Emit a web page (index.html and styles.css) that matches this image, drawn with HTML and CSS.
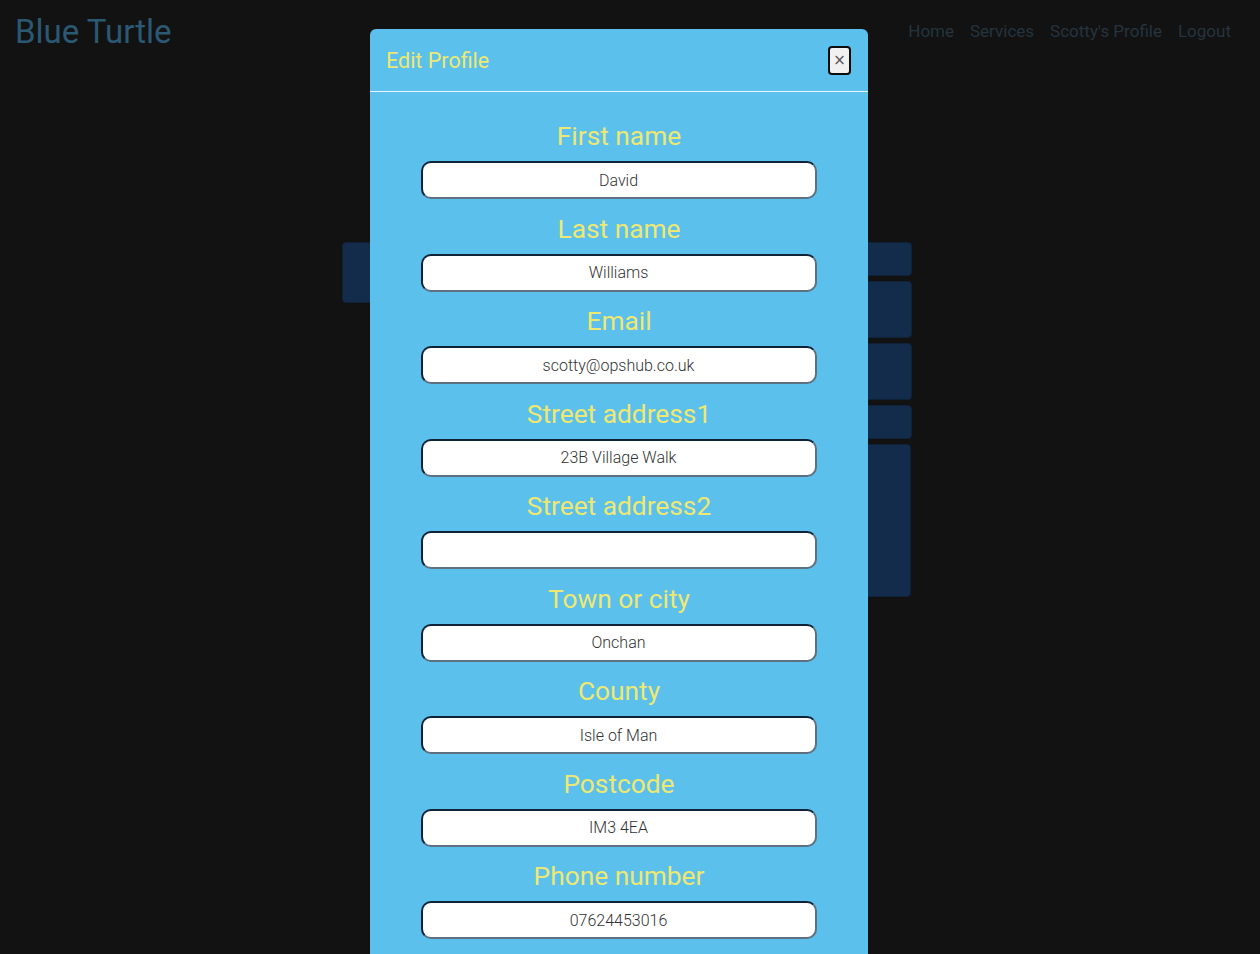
FILE: index.html
```html
<!DOCTYPE html>
<html lang="en">
<head>
<meta charset="utf-8">
<title>Blue Turtle</title>
<link rel="stylesheet" href="styles.css">
</head>
<body>
<header class="topbar">
  <div class="brand">Blue Turtle</div>
  <nav class="nav">
    <a href="#">Home</a>
    <a href="#">Services</a>
    <a href="#">Scotty's Profile</a>
    <a href="#">Logout</a>
  </nav>
</header>
<main class="page">
  <div class="col-left">
    <div class="card card-l1"></div>
  </div>
  <div class="col-right">
    <div class="card card-r1"></div>
    <div class="card card-r2"></div>
    <div class="card card-r3"></div>
    <div class="card card-r4"></div>
    <div class="card card-r5"></div>
  </div>
</main>

<div class="modal">
  <div class="modal-header">
    <h5 class="modal-title">Edit Profile</h5>
    <button class="close-btn" type="button">×</button>
  </div>
  <form class="modal-body">
    <label class="field-label">First name</label>
    <input class="field-input" type="text" value="David">
    <label class="field-label">Last name</label>
    <input class="field-input" type="text" value="Williams">
    <label class="field-label">Email</label>
    <input class="field-input" type="text" value="scotty@opshub.co.uk">
    <label class="field-label">Street address1</label>
    <input class="field-input" type="text" value="23B Village Walk">
    <label class="field-label">Street address2</label>
    <input class="field-input" type="text" value="">
    <label class="field-label">Town or city</label>
    <input class="field-input" type="text" value="Onchan">
    <label class="field-label">County</label>
    <input class="field-input" type="text" value="Isle of Man">
    <label class="field-label">Postcode</label>
    <input class="field-input" type="text" value="IM3 4EA">
    <label class="field-label">Phone number</label>
    <input class="field-input" type="text" value="07624453016">
  </form>
</div>
</body>
</html>
```

FILE: styles.css
```css
html, body {
  margin: 0;
  padding: 0;
  height: 100%;
  overflow: hidden;
}
body {
  background: #121212;
  font-family: Roboto, "Liberation Sans", sans-serif;
}
.topbar {
  display: flex;
  justify-content: space-between;
  align-items: center;
  padding: 12px 29px 0 16px;
  height: 40px;
}
.brand {
  font-size: 33px;
  color: #2b5873;
  line-height: 40px;
  margin-left: -1px;
}
.nav {
  display: flex;
  gap: 16px;
  margin-top: -2px;
}
.nav a {
  color: #25343f;
  text-decoration: none;
  font-size: 17px;
}
.page {
  display: flex;
  gap: 8px;
  width: 570px;
  margin: 190px 0 0 342px;
}
.col-left {
  width: 250px;
}
.col-right {
  flex: 1;
  display: flex;
  flex-direction: column;
  gap: 5px;
}
.card {
  background: #132c4b;
  border: 1px solid #0f2238;
  border-radius: 4px;
  box-sizing: border-box;
  flex: none;
}
.card-l1 { height: 61px; }
.card-r1 { height: 34px; }
.card-r2 { height: 57px; }
.card-r3 { height: 57px; }
.card-r4 { height: 34px; }
.card-r5 { height: 153px; margin-right: 1px; }

.modal {
  position: fixed;
  top: 29px;
  left: 370px;
  width: 498px;
  height: 1100px;
  background: #5bc0eb;
  border-radius: 6px;
}
.modal-header {
  display: flex;
  justify-content: space-between;
  align-items: center;
  height: 62px;
  padding: 0 16px;
  border-bottom: 1px solid rgba(255, 255, 255, 0.85);
}
.modal-title {
  margin: 0;
  font-weight: 400;
  font-size: 21.5px;
  color: #eee873;
}
.close-btn {
  width: 23px;
  height: 29px;
  padding: 0;
  background: #f1f1f1;
  border: 2px solid #0d0d0d;
  border-radius: 4px;
  color: #555;
  font-size: 15px;
  line-height: 1;
  font-family: "DejaVu Sans", sans-serif;
  margin-right: 1px;
}
.modal-body {
  display: flex;
  flex-direction: column;
  align-items: center;
  padding-top: 14.5px;
}
.field-label {
  font-size: 26.3px;
  font-weight: 400;
  line-height: 34px;
  color: #eee873;
  margin: 12.5px 0 8px;
}
.field-input {
  box-sizing: border-box;
  width: 396px;
  height: 38px;
  margin-left: -1px;
  border: 2px solid;
  border-color: #0f2236 #5e6f80 #5e6f80 #0f2236;
  border-radius: 10px;
  background: #fff;
  text-align: center;
  font-family: Roboto, "Liberation Sans", sans-serif;
  font-weight: 300;
  font-size: 16px;
  color: #333;
  padding: 0 8px;
}
```
